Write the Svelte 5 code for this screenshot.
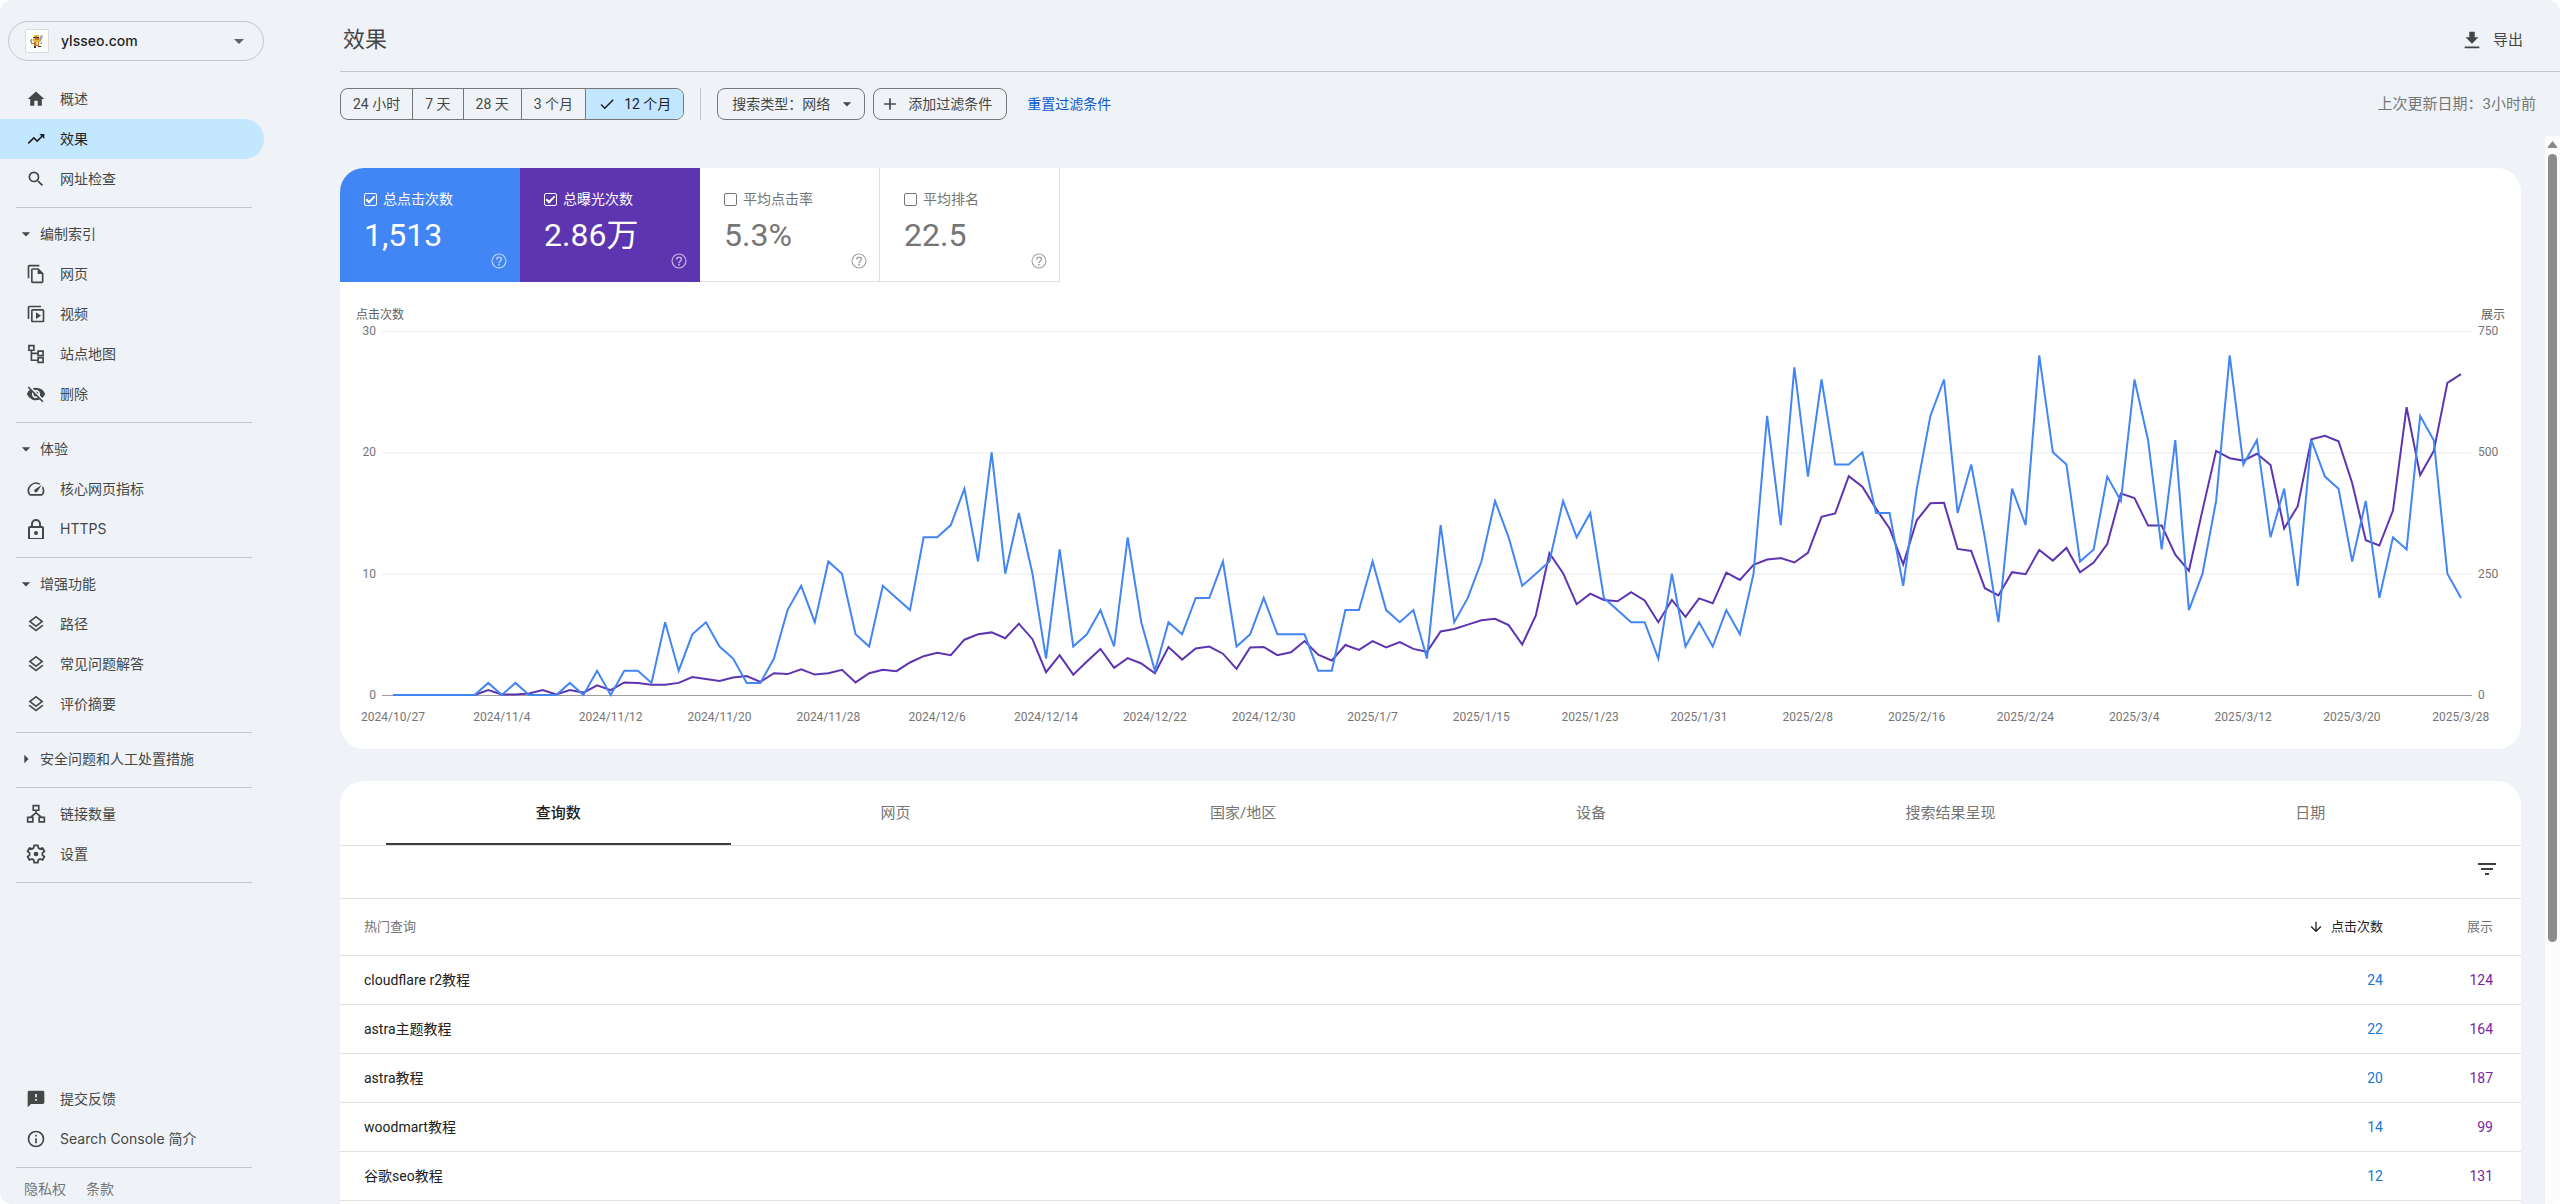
<script lang="ts">
  type NavItem = { icon: string; label: string; active?: boolean };
  type NavGroup = { title?: string; open?: boolean; items: NavItem[] };

  const groups: NavGroup[] = [
    {
      items: [
        { icon: 'home', label: '概述' },
        { icon: 'trend', label: '效果', active: true },
        { icon: 'search', label: '网址检查' }
      ]
    },
    {
      title: '编制索引',
      open: true,
      items: [
        { icon: 'pages', label: '网页' },
        { icon: 'video', label: '视频' },
        { icon: 'sitemap', label: '站点地图' },
        { icon: 'hidden', label: '删除' }
      ]
    },
    {
      title: '体验',
      open: true,
      items: [
        { icon: 'speed', label: '核心网页指标' },
        { icon: 'lock', label: 'HTTPS' }
      ]
    },
    {
      title: '增强功能',
      open: true,
      items: [
        { icon: 'layers', label: '路径' },
        { icon: 'layers', label: '常见问题解答' },
        { icon: 'layers', label: '评价摘要' }
      ]
    },
    { title: '安全问题和人工处置措施', open: false, items: [] },
    {
      items: [
        { icon: 'links', label: '链接数量' },
        { icon: 'settings', label: '设置' }
      ]
    }
  ];

  const footerItems: NavItem[] = [
    { icon: 'feedback', label: '提交反馈' },
    { icon: 'info', label: 'Search Console 简介' }
  ];

  const periods = ['24 小时', '7 天', '28 天', '3 个月', '12 个月'];
  let period = $state('12 个月');

  let metrics = $state([
    { key: 'clicks', label: '总点击次数', value: '1,513', on: true },
    { key: 'impressions', label: '总曝光次数', value: '2.86万', on: true },
    { key: 'ctr', label: '平均点击率', value: '5.3%', on: false },
    { key: 'position', label: '平均排名', value: '22.5', on: false }
  ]);

  const tabs = ['查询数', '网页', '国家/地区', '设备', '搜索结果呈现', '日期'];
  let tab = $state('查询数');

  const rows = [
    { query: 'cloudflare r2教程', clicks: 24, impressions: 124 },
    { query: 'astra主题教程', clicks: 22, impressions: 164 },
    { query: 'astra教程', clicks: 20, impressions: 187 },
    { query: 'woodmart教程', clicks: 14, impressions: 99 },
    { query: '谷歌seo教程', clicks: 12, impressions: 131 }
  ];

  // one value per day, 2024/10/27 to 2025/3/28
  const clicks = [
    0, 0, 0, 0, 0, 0, 0, 1, 0, 1, 0, 0, 0, 1, 0, 2, 0, 2, 2, 1, 6, 2, 5, 6, 4, 3, 1, 1, 3, 7, 9, 6,
    11, 10, 5, 4, 9, 8, 7, 13, 13, 14, 17, 11, 20, 10, 15, 10, 3, 12, 4, 5, 7, 4, 13, 6, 2, 6, 5, 8,
    8, 11, 4, 5, 8, 5, 5, 5, 2, 2, 7, 7, 11, 7, 6, 7, 3, 14, 6, 8, 11, 16, 13, 9, 10, 11, 16, 13,
    15, 8, 7, 6, 6, 3, 10, 4, 6, 4, 7, 5, 10, 23, 14, 27, 18, 26, 19, 19, 20, 15, 15, 9, 17, 23, 26,
    15, 19, 13, 6, 17, 14, 28, 20, 19, 11, 12, 18, 16, 26, 21, 12, 21, 7, 10, 16, 28, 19, 21, 13,
    17, 9, 21, 18, 17, 11, 16, 8, 13, 12, 23, 21, 10, 8
  ];

  const impressions = [
    0, 0, 0, 0, 0, 0, 0, 10, 1, 1, 3, 10, 1, 10, 5, 20, 10, 26, 25, 21, 21, 25, 37, 33, 29, 36, 39,
    27, 45, 43, 53, 42, 45, 52, 26, 45, 52, 49, 67, 80, 87, 82, 114, 125, 129, 117, 147, 115, 47,
    82, 42, 69, 95, 56, 76, 65, 45, 99, 73, 96, 100, 85, 54, 98, 99, 82, 88, 111, 83, 71, 103, 93,
    111, 98, 109, 95, 89, 131, 136, 145, 154, 157, 144, 104, 164, 292, 251, 187, 209, 196, 193, 212,
    195, 150, 196, 161, 199, 189, 252, 237, 268, 279, 282, 273, 293, 367, 374, 451, 429, 384, 343,
    269, 360, 395, 396, 301, 297, 220, 205, 253, 249, 299, 277, 303, 253, 273, 311, 415, 406, 349,
    349, 289, 256, 381, 503, 488, 483, 497, 474, 343, 389, 527, 534, 523, 437, 319, 308, 380, 593,
    453, 503, 643, 661
  ];

  const dates = [
    '2024/10/27', '2024/11/4', '2024/11/12', '2024/11/20', '2024/11/28', '2024/12/6', '2024/12/14',
    '2024/12/22', '2024/12/30', '2025/1/7', '2025/1/15', '2025/1/23', '2025/1/31', '2025/2/8',
    '2025/2/16', '2025/2/24', '2025/3/4', '2025/3/12', '2025/3/20', '2025/3/28'
  ];

  const PLOT_HEIGHT = 364;

  function toPoints(values: number[], max: number): string {
    return values.map((v, i) => `${i},${(PLOT_HEIGHT * (1 - v / max)).toFixed(1)}`).join(' ');
  }

  let clickPoints = $derived(toPoints(clicks, 30));
  let impressionPoints = $derived(toPoints(impressions, 750));
</script>

{#snippet icon(name: string)}
  <svg class="icon" viewBox={name === 'lock' ? '2 1 20 20' : name === 'settings' ? '1 1 22 22' : '0 0 24 24'} aria-hidden="true">
    {#if name === 'home'}
      <path d="M10 20v-6h4v6h5v-8h3L12 3 2 12h3v8z" />
    {:else if name === 'trend'}
      <path d="M16 6l2.29 2.29-4.88 4.88-4-4L2 16.59 3.41 18l6-6 4 4 6.3-6.29L22 12V6z" />
    {:else if name === 'search'}
      <path d="M15.5 14h-.79l-.28-.27A6.47 6.47 0 0 0 16 9.5 6.5 6.5 0 1 0 9.5 16c1.61 0 3.09-.59 4.23-1.57l.27.28v.79l5 4.99L20.49 19l-4.99-5zm-6 0C7.01 14 5 11.99 5 9.5S7.01 5 9.5 5 14 7.01 14 9.5 11.99 14 9.5 14z" />
    {:else if name === 'pages'}
      <path d="M16 1H4c-1.1 0-2 .9-2 2v14h2V3h12V1zm-1 4H8c-1.1 0-2 .9-2 2v14c0 1.1.9 2 2 2h11c1.1 0 2-.9 2-2V11l-6-6zM8 21V7h6v5h5v9H8z" />
    {:else if name === 'video'}
      <path d="M4 4h14V2H4a2 2 0 0 0-2 2v14h2zm16 2H8a2 2 0 0 0-2 2v12c0 1.100.9 2 2 2h12a2 2 0 0 0 2-2V8a2 2 0 0 0-2-2zm0 14H8V8h12v12zm-8-10v8l6-4z" />
    {:else if name === 'sitemap'}
      <path class="line" d="M3.500 2h6v5.500h-6zM14.500 8.500h6V14h-6zM14.500 16.500h6V22h-6zM6.500 7.500v12h8M6.500 11.200h8" />
    {:else if name === 'hidden'}
      <path d="M12 7a5 5 0 0 1 4.640 6.830l2.920 2.920A11.800 11.800 0 0 0 22.990 12 11.820 11.820 0 0 0 12 4.500c-1.400 0-2.740.25-3.980.7l2.160 2.160A5 5 0 0 1 12 7zM2 4.270l2.280 2.280.46.46A11.800 11.800 0 0 0 1 12a11.830 11.830 0 0 0 15.380 6.660l.42.42L19.730 22 21 20.730 3.270 3 2 4.270zM7.530 9.800l1.550 1.550a3 3 0 0 0 3.560 3.560l1.550 1.550A5 5 0 0 1 7.530 9.800zm4.310-.78 3.150 3.150.02-.16a3 3 0 0 0-3.170-2.990z" />
    {:else if name === 'speed'}
      <path d="M20.380 8.570l-1.230 1.850a8 8 0 0 1-.22 7.580H5.070A8 8 0 0 1 15.580 6.850l1.850-1.230A10 10 0 0 0 3.350 19a2 2 0 0 0 1.720 1h13.850a2 2 0 0 0 1.740-1 10 10 0 0 0-.27-10.440zM10.590 15.410a2 2 0 0 0 2.830 0l5.660-8.490-8.490 5.660a2 2 0 0 0 0 2.830z" />
    {:else if name === 'lock'}
      <path d="M18 8h-1V6A5 5 0 0 0 7 6v2H6a2 2 0 0 0-2 2v10c0 1.100.9 2 2 2h12a2 2 0 0 0 2-2V10a2 2 0 0 0-2-2zM9 6a3 3 0 0 1 6 0v2H9zm9 14H6V10h12zm-6-3a2 2 0 1 0 0-4 2 2 0 0 0 0 4z" />
    {:else if name === 'layers'}
      <path d="M11.990 18.540l-7.370-5.730L3 14.070l9 7 9-7-1.630-1.270zM12 16l7.360-5.730L21 9l-9-7-9 7 1.630 1.270zm0-11.470L17.740 9 12 13.470 6.260 9z" />
    {:else if name === 'links'}
      <path class="line" d="M8.700 2h6.600v5.500H8.700zM2 16h6.200v5.500H2zM15.800 16H22v5.500h-6.200zM12 7.500V11M5.200 16 12 10.500l6.800 5.500" />
    {:else if name === 'settings'}
      <path class="line" d="M10 2.500h4l.6 2.900 1.800 1 2.800-1 2 3.500L19 11v2l2.200 2-2 3.500-2.800-1-1.800 1-.6 3h-4l-.6-3-1.800-1-2.800 1-2-3.500L5 13v-2L2.800 8.900l2-3.500 2.800 1 1.800-1z" />
      <circle cx="12" cy="12" r="2.600" />
    {:else if name === 'feedback'}
      <path d="M20 2H4a2 2 0 0 0-2 2v18l4-4h14a2 2 0 0 0 2-2V4a2 2 0 0 0-2-2zm-7 12h-2v-2h2v2zm0-4h-2V6h2v4z" />
    {:else if name === 'info'}
      <path d="M11 7h2v2h-2zm0 4h2v6h-2zm1-9a10 10 0 1 0 0 20 10 10 0 0 0 0-20zm0 18a8 8 0 1 1 0-16 8 8 0 0 1 0 16z" />
    {:else if name === 'down'}
      <path d="M7 10l5 5 5-5z" />
    {:else if name === 'right'}
      <path d="M10 17l5-5-5-5z" />
    {:else if name === 'export'}
      <path d="M19 9h-4V3H9v6H5l7 7 7-7zM4 19v2h16v-2z" />
    {:else if name === 'check'}
      <path d="M9 16.170 4.830 12l-1.420 1.410L9 19 21 7l-1.410-1.410z" />
    {:else if name === 'plus'}
      <path d="M19 13h-6v6h-2v-6H5v-2h6V5h2v6h6z" />
    {:else if name === 'help'}
      <path d="M11 18h2v-2h-2v2zm1-16a10 10 0 1 0 0 20 10 10 0 0 0 0-20zm0 18.600a8.600 8.600 0 1 1 0-17.200 8.600 8.600 0 0 1 0 17.200zM12 6a4 4 0 0 0-4 4h1.700a2.300 2.300 0 0 1 4.600 0c0 2-3.100 1.750-3.100 5h1.700c0-2.250 3.100-2.500 3.100-5a4 4 0 0 0-4-4z" />
    {:else if name === 'filter'}
      <path d="M10 18h4v-2h-4v2zM3 6v2h18V6H3zm3 7h12v-2H6v2z" />
    {:else if name === 'arrow'}
      <path d="M20 12l-1.410-1.410L13 16.170V4h-2v12.170l-5.580-5.590L4 12l8 8z" />
    {/if}
  </svg>
{/snippet}

{#snippet navLink(item: NavItem)}
  <a class="nav-row" class:active={item.active} href="#{item.icon}" aria-current={item.active ? 'page' : undefined}>
    {@render icon(item.icon)}
    <span>{item.label}</span>
  </a>
{/snippet}

<div class="app">
  <aside class="sidebar">
    <div class="property">
      <span class="favicon" aria-hidden="true">
        <svg viewBox="0 0 16 16">
          <path fill="#e9b23c" d="M5 2h5v2l1 2-1 3H5L3 7l2-2z" />
          <path fill="#c9702b" d="M6 5h4v2H6zM5 9h5v4H5zM2 6h1v4h2v1H2z" />
          <path fill="#3b3430" d="M4 4h6v1H4zM5 13h2v2H5zM9 13h3v1H9z" />
          <path fill="#9da5a8" d="M11 3l3-1-1 4-2 3h-1zM1 7h2v2H1zM12 9h1v2h-2z" />
          <path fill="#f3d98b" d="M7 9h2v3H7z" />
        </svg>
      </span>
      <select aria-label="资源">
        <option>ylsseo.com</option>
      </select>
      {@render icon('down')}
    </div>

    <nav>
      {#each groups as group}
        <div class="nav-group">
          {#if group.title}
            <button class="nav-title" type="button" aria-expanded={group.open}>
              {@render icon(group.open ? 'down' : 'right')}
              <span>{group.title}</span>
            </button>
          {/if}
          {#each group.items as item}
            {@render navLink(item)}
          {/each}
        </div>
      {/each}
    </nav>

    <div class="sidebar-footer">
      <div class="nav-group">
        {#each footerItems as item}
          {@render navLink(item)}
        {/each}
      </div>
      <div class="legal">
        <a href="#privacy">隐私权</a>
        <a href="#terms">条款</a>
      </div>
    </div>
  </aside>

  <main>
    <header>
      <h1>效果</h1>
      <button class="export" type="button">
        {@render icon('export')}
        导出
      </button>
    </header>

    <div class="toolbar">
      <div class="periods" role="group" aria-label="日期范围">
        {#each periods as p}
          <button type="button" class:selected={p === period} aria-pressed={p === period} onclick={() => (period = p)}>
            {#if p === period}{@render icon('check')}{/if}
            {p}
          </button>
        {/each}
      </div>
      <span class="separator"></span>
      <div class="filters">
        <button class="chip type-chip" type="button" aria-haspopup="dialog">
          搜索类型：网络
          {@render icon('down')}
        </button>
        <button class="chip add-chip" type="button">
          {@render icon('plus')}
          添加过滤条件
        </button>
      </div>
      <a class="reset" href="#reset">重置过滤条件</a>
      <span class="updated">上次更新日期：3小时前</span>
    </div>

    <div class="scroll-area">
      <div class="content">
        <section class="card chart-card">
          <div class="metrics">
            {#each metrics as m}
              <div class="metric {m.key}" class:on={m.on}>
                <label>
                  <input type="checkbox" bind:checked={m.on} />
                  {m.label}
                </label>
                <div class="metric-value">{m.value}</div>
                <button class="help" type="button" aria-label="{m.label}说明">
                  {@render icon('help')}
                </button>
              </div>
            {/each}
          </div>

          <div class="chart">
            <div class="axis-titles">
              <span>点击次数</span>
              <span>展示</span>
            </div>
            <div class="plot-row">
              <div class="ticks ticks-left">
                <span>30</span><span>20</span><span>10</span><span>0</span>
              </div>
              <div class="plot">
                <svg viewBox="0 0 152 {PLOT_HEIGHT}" preserveAspectRatio="none" role="img" aria-label="点击次数和展示">
                  {#if metrics[1].on}
                    <polyline class="series impressions-line" points={impressionPoints} />
                  {/if}
                  {#if metrics[0].on}
                    <polyline class="series clicks-line" points={clickPoints} />
                  {/if}
                </svg>
              </div>
              <div class="ticks ticks-right">
                <span>750</span><span>500</span><span>250</span><span>0</span>
              </div>
            </div>
            <div class="dates">
              {#each dates as d}
                <span>{d}</span>
              {/each}
            </div>
          </div>
        </section>

        <section class="card table-card">
          <div class="tabs" role="tablist">
            {#each tabs as t}
              <button type="button" role="tab" class:selected={t === tab} aria-selected={t === tab} onclick={() => (tab = t)}>
                {t}
              </button>
            {/each}
          </div>
          <div class="table-tools">
            <button type="button" aria-label="过滤行">{@render icon('filter')}</button>
          </div>
          <table>
            <thead>
              <tr>
                <th class="col-query">热门查询</th>
                <th class="col-clicks" aria-sort="descending">
                  <span>{@render icon('arrow')}点击次数</span>
                </th>
                <th class="col-impressions">展示</th>
              </tr>
            </thead>
            <tbody>
              {#each rows as row}
                <tr>
                  <td class="col-query">{row.query}</td>
                  <td class="col-clicks">{row.clicks}</td>
                  <td class="col-impressions">{row.impressions}</td>
                </tr>
              {/each}
            </tbody>
          </table>
        </section>
      </div>

      <div class="scrollbar" aria-hidden="true">
        <svg viewBox="0 0 9 7"><path d="M4.500 0 9 5.500V7H0V5.500z" /></svg>
        <div class="track"><div class="thumb"></div></div>
      </div>
    </div>
  </main>
</div>

<style>
  :global(body) {
    margin: 0;
    background: #fff;
  }

  .app {
    --text: #444746;
    --muted: #757575;
    --line: #c4c7c5;
    --hairline: #e0e0e0;

    display: flex;
    height: 100vh;
    overflow: hidden;
    border-radius: 12px;
    background: #eff3f8;
    color: var(--text);
    font-family: Roboto, 'Noto Sans CJK SC', sans-serif;
    font-size: 14px;
    line-height: 20px;
  }

  button,
  select,
  input {
    margin: 0;
    padding: 0;
    border: 0;
    background: none;
    color: inherit;
    font: inherit;
    cursor: pointer;
  }

  a {
    color: inherit;
    text-decoration: none;
  }

  .icon {
    display: block;
    flex-shrink: 0;
    width: 20px;
    height: 20px;
    fill: currentColor;
  }

  .icon .line {
    fill: none;
    stroke: currentColor;
    stroke-width: 2;
  }

  /* Sidebar */
  .sidebar {
    display: flex;
    flex-direction: column;
    flex-shrink: 0;
    width: 340px;
    font-family: Inter, 'Noto Sans CJK SC', sans-serif;
  }

  .property {
    display: flex;
    align-items: center;
    box-sizing: border-box;
    width: 256px;
    height: 40px;
    margin: 21px 0 18px 8px;
    padding: 0 12px 0 16px;
    border: 1px solid var(--line);
    border-radius: 20px;
    color: #1f1f1f;
  }

  .property .icon {
    width: 24px;
    height: 24px;
    color: #5f6368;
  }

  .favicon {
    display: flex;
    align-items: center;
    justify-content: center;
    box-sizing: border-box;
    width: 24px;
    height: 24px;
    margin-right: 12px;
    border: 1px solid #dadce0;
    border-radius: 2px;
    background: #fff;
  }

  .favicon svg {
    width: 16px;
    height: 16px;
  }

  .property select {
    flex: 1;
    min-width: 0;
    appearance: none;
    font-weight: 500;
  }

  .nav-group {
    display: flex;
    flex-direction: column;
  }

  .nav-group::after {
    content: '';
    height: 1px;
    margin: 8px 88px 6px 16px;
    background: var(--line);
  }

  .nav-row,
  .nav-title {
    display: flex;
    align-items: center;
    height: 40px;
    margin-right: 76px;
  }

  .nav-row {
    gap: 14px;
    padding-left: 26px;
    border-radius: 0 20px 20px 0;
  }

  .nav-row span,
  .nav-title span {
    white-space: nowrap;
  }

  .nav-row.active {
    background: #c2e7ff;
    color: #1f1f1f;
  }

  .nav-title {
    gap: 4px;
    padding-left: 16px;
  }

  .sidebar-footer {
    margin-top: auto;
  }

  .legal {
    display: flex;
    gap: 20px;
    padding: 5px 24px;
    color: var(--muted);
  }

  /* Header */
  main {
    display: flex;
    flex: 1;
    flex-direction: column;
    min-width: 0;
  }

  header {
    display: flex;
    align-items: center;
    justify-content: space-between;
    box-sizing: border-box;
    height: 72px;
    padding: 8px 37px 0 3px;
    border-bottom: 1px solid var(--line);
  }

  h1 {
    margin: 0;
    font-size: 22px;
    font-weight: 400;
    line-height: 28px;
  }

  .export {
    display: flex;
    align-items: center;
    gap: 10px;
    font-size: 15px;
  }

  .export .icon {
    width: 22px;
    height: 22px;
  }

  /* Toolbar */
  .toolbar {
    display: flex;
    align-items: center;
    gap: 16px;
    height: 64px;
    padding-right: 24px;
  }

  .periods {
    display: flex;
    overflow: hidden;
    border: 1px solid #747775;
    border-radius: 8px;
  }

  .periods button {
    display: flex;
    align-items: center;
    gap: 8px;
    height: 30px;
    padding: 0 12px;
    white-space: nowrap;
  }

  .periods button + button {
    border-left: 1px solid #747775;
  }

  .periods .selected {
    background: #c2e7ff;
    color: #1f1f1f;
  }

  .periods .icon {
    width: 18px;
    height: 18px;
  }

  .separator {
    width: 1px;
    height: 32px;
    background: var(--line);
  }

  .filters {
    display: flex;
    gap: 8px;
  }

  .chip {
    display: flex;
    align-items: center;
    box-sizing: border-box;
    height: 32px;
    border: 1px solid #747775;
    border-radius: 8px;
    white-space: nowrap;
  }

  .type-chip {
    gap: 7px;
    padding: 0 7px 0 14px;
  }

  .add-chip {
    gap: 8px;
    padding: 0 14px 0 6px;
  }

  .reset {
    margin-left: 4px;
    color: #0b57d0;
    white-space: nowrap;
  }

  .updated {
    margin-left: auto;
    color: #747775;
    font-size: 15px;
    white-space: nowrap;
  }

  /* Scrolling content */
  .scroll-area {
    display: flex;
    flex: 1;
    gap: 24px;
    min-height: 0;
  }

  .content {
    flex: 1;
    min-width: 0;
    overflow: hidden;
  }

  .scrollbar {
    display: flex;
    flex-direction: column;
    align-items: center;
    gap: 6px;
    width: 15px;
    padding-top: 5px;
    background: #fcfcfc;
  }

  .scrollbar svg {
    width: 9px;
    height: 7px;
    fill: #8b8b8b;
  }

  .track {
    flex: 1;
    width: 9px;
  }

  .thumb {
    height: 75%;
    border-radius: 5px;
    background: #8b8b8b;
  }

  .card {
    overflow: hidden;
    margin-top: 32px;
    border-radius: 24px;
    background: #fff;
  }

  /* Metric tiles */
  .metrics {
    display: flex;
  }

  .metric {
    display: flex;
    flex-direction: column;
    box-sizing: border-box;
    width: 180px;
    height: 114px;
    padding: 21px 11px 0 24px;
    border: solid var(--hairline);
    border-width: 0 1px 1px 0;
    color: var(--muted);
  }

  .metric.on {
    color: #fff;
  }

  .metric.clicks.on {
    background: #4285f4;
    border-color: #4285f4;
  }

  .metric.impressions.on {
    background: #5e35b1;
    border-color: #5e35b1;
  }

  .metric label {
    display: flex;
    align-items: center;
    gap: 6px;
    cursor: pointer;
  }

  .metric input {
    display: flex;
    align-items: center;
    justify-content: center;
    box-sizing: border-box;
    width: 13px;
    height: 13px;
    border: 1px solid currentColor;
    border-radius: 2px;
    appearance: none;
  }

  .metric input:checked::after {
    content: '';
    width: 3px;
    height: 7px;
    margin-bottom: 2px;
    border: solid currentColor;
    border-width: 0 2px 2px 0;
    transform: rotate(45deg);
  }

  .metric-value {
    margin-top: 6px;
    font-size: 32px;
    line-height: 40px;
  }

  .help {
    align-self: flex-end;
    margin-top: -3px;
    opacity: 0.7;
  }

  .help .icon {
    width: 18px;
    height: 18px;
  }

  /* Chart */
  .chart {
    padding: 25px 0 24px;
    color: var(--muted);
    font-size: 12px;
    line-height: 16px;
  }

  .axis-titles {
    display: flex;
    justify-content: space-between;
    padding: 0 16px;
    color: #616161;
  }

  .plot-row {
    display: flex;
    gap: 6px;
    padding-top: 8px;
  }

  .ticks {
    display: flex;
    flex-direction: column;
    justify-content: space-between;
    width: 36px;
    height: 364px;
  }

  .ticks span {
    display: flex;
    align-items: center;
    height: 0;
  }

  .ticks-left {
    align-items: flex-end;
  }

  .ticks-right {
    width: 43px;
  }

  .plot {
    flex: 1;
    min-width: 0;
    height: 364px;
    padding: 0 11px;
    border-bottom: 1px solid #9e9e9e;
    background: linear-gradient(#ebebeb 1px, transparent 1px) 0 0 / 100% calc(100% / 3);
  }

  .plot svg {
    display: block;
    width: 100%;
    height: 364px;
    overflow: visible;
  }

  .series {
    fill: none;
    stroke-width: 2;
    vector-effect: non-scaling-stroke;
  }

  .clicks-line {
    stroke: #4285f4;
  }

  .impressions-line {
    stroke: #5e35b1;
  }

  .dates {
    display: flex;
    justify-content: space-between;
    padding: 13px 60px 0 53px;
  }

  .dates span {
    display: flex;
    justify-content: center;
    width: 0;
    white-space: nowrap;
  }

  /* Query table */
  .table-card {
    padding-bottom: 48px;
  }

  .tabs {
    display: flex;
    padding: 0 46px;
    border-bottom: 1px solid var(--hairline);
  }

  .tabs button {
    flex: 1 1 auto;
    height: 64px;
    border: solid transparent;
    border-width: 2px 0;
    color: var(--muted);
    font-size: 15px;
  }

  .tabs .selected {
    border-bottom-color: #3c3c3c;
    color: #212121;
    font-weight: 500;
  }

  .table-tools {
    display: flex;
    justify-content: flex-end;
    align-items: center;
    height: 52px;
    padding-right: 22px;
    border-bottom: 1px solid var(--hairline);
    color: #3c4043;
  }

  .table-tools .icon {
    width: 24px;
    height: 24px;
    margin-bottom: 6px;
  }

  table {
    width: 100%;
    border-collapse: collapse;
    color: #212121;
  }

  th,
  td {
    height: 48px;
    padding: 0;
    border-bottom: 1px solid var(--hairline);
    font-weight: 400;
    text-align: right;
  }

  th {
    height: 56px;
    color: var(--muted);
    font-size: 13px;
  }

  .col-query {
    padding-left: 24px;
    text-align: left;
  }

  .col-clicks {
    width: 140px;
  }

  .col-impressions {
    width: 110px;
    padding-right: 28px;
  }

  th.col-clicks {
    color: #212121;
  }

  th.col-clicks span {
    display: flex;
    align-items: center;
    justify-content: flex-end;
    gap: 7px;
  }

  th .icon {
    width: 16px;
    height: 16px;
  }

  td.col-clicks {
    color: #1976d2;
  }

  td.col-impressions {
    color: #7b1fa2;
  }
</style>
